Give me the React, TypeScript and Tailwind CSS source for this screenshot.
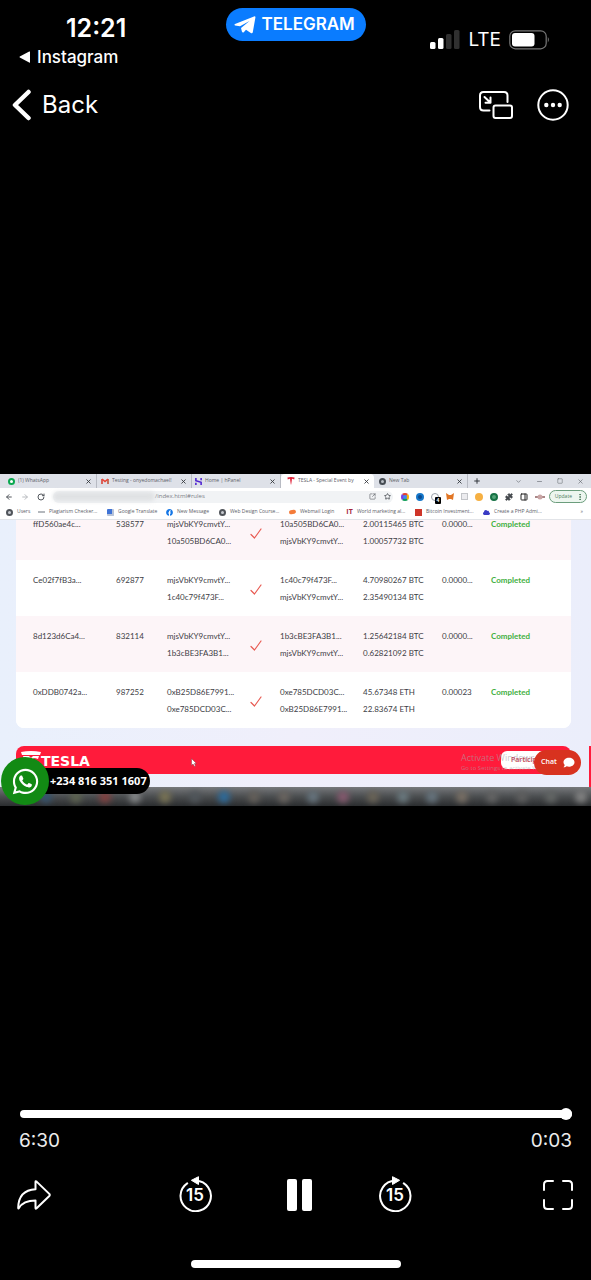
import React from "react";
import {
  ChevronDown,
  Minus,
  Plus,
  RotateCw,
  Square,
  Star,
  X,
  ArrowLeft,
  ArrowRight,
  SquareArrowOutUpRight,
  Puzzle,
  PanelRight,
  MoreVertical,
} from "lucide-react";
import { FaWhatsapp, FaFacebook, FaCloud, FaComment } from "react-icons/fa";

type Tx = {
  hash: string;
  block: string;
  from: [string, string];
  to: [string, string];
  amount: [string, string];
  fee: string;
};

const transactions: Tx[] = [
  {
    hash: "ffD560ae4c...",
    block: "538577",
    from: ["mjsVbKY9cmvtY...", "10a505BD6CA0..."],
    to: ["10a505BD6CA0...", "mjsVbKY9cmvtY..."],
    amount: ["2.00115465 BTC", "1.00057732 BTC"],
    fee: "0.0000...",
  },
  {
    hash: "Ce02f7fB3a...",
    block: "692877",
    from: ["mjsVbKY9cmvtY...", "1c40c79f473F..."],
    to: ["1c40c79f473F...", "mjsVbKY9cmvtY..."],
    amount: ["4.70980267 BTC", "2.35490134 BTC"],
    fee: "0.0000...",
  },
  {
    hash: "8d123d6Ca4...",
    block: "832114",
    from: ["mjsVbKY9cmvtY...", "1b3cBE3FA3B1..."],
    to: ["1b3cBE3FA3B1...", "mjsVbKY9cmvtY..."],
    amount: ["1.25642184 BTC", "0.62821092 BTC"],
    fee: "0.0000...",
  },
  {
    hash: "0xDDB0742a...",
    block: "987252",
    from: ["0xB25D86E7991...", "0xe785DCD03C..."],
    to: ["0xe785DCD03C...", "0xB25D86E7991..."],
    amount: ["45.67348 ETH", "22.83674 ETH"],
    fee: "0.00023",
  },
];

function StatusBar() {
  return (
    <div className="grid grid-cols-3 items-start">
      <div className="pt-[14px] pl-[19px]">
        <div className="pl-[47px] text-[25px] leading-7 font-semibold">12:21</div>
        <a href="#instagram" className="mt-[5px] flex items-center gap-[6px] text-[17px] leading-5 font-medium">
          <svg viewBox="0 0 12 12" className="size-3 fill-white">
            <path d="M11 .8v10.4Q11 12 10.200 11.500L.8 6.600Q.2 6 .8 5.400L10.200.5Q11 .2 11 .8Z" />
          </svg>
          Instagram
        </a>
      </div>
      <button
        type="button"
        className="mt-2 flex h-[33px] w-[140px] items-center gap-[6px] justify-self-center rounded-full bg-[#0a7cff] pl-2 text-[17px] font-semibold"
      >
        <svg viewBox="0 0 22 18" className="h-[18px] w-[22px] shrink-0 fill-white">
          <path d="M1 8 20 .4Q21.700-.1 21.400 1.600L18.800 16.200Q18.400 18 16.800 17L12 13.800 10 16Q8.600 17.300 7.900 15.500L7 12 15.500 5 6 10.300 1 9.500Q-.2 8.800 1 8Z" />
        </svg>
        TELEGRAM
      </button>
      <div className="flex items-center justify-end gap-2 pt-[30px] pr-[41px]">
        <svg viewBox="0 0 30 20" className="h-5 w-[30px]" aria-label="Signal">
          <rect x="0" y="12" width="5.500" height="7" rx="1.500" fill="#fff" />
          <rect x="8" y="8" width="5.500" height="11" rx="1.500" fill="#fff" />
          <rect x="16" y="4" width="5.500" height="15" rx="1.500" fill="#303030" />
          <rect x="24" y="0" width="5.500" height="19" rx="1.500" fill="#303030" />
        </svg>
        <span className="text-[19px] leading-5">LTE</span>
        <svg viewBox="0 0 41 20" className="h-5 w-[41px]" aria-label="Battery">
          <rect x=".8" y=".8" width="36.400" height="18" rx="5.500" fill="none" stroke="#777" strokeWidth="1.200" />
          <rect x="3" y="3" width="22.500" height="13.600" rx="3" fill="#fff" />
          <path d="M38.800 7q2.200 2.700 0 5.500Z" fill="#777" />
        </svg>
      </div>
    </div>
  );
}

function PlayerHeader() {
  return (
    <div className="mt-5 flex h-9 items-center justify-between pr-[22px] pl-3">
      <button type="button" className="flex items-center gap-[10px] text-2xl">
        <svg viewBox="0 0 20 32" className="h-8 w-5" fill="none" stroke="#fff" strokeWidth="4.500" strokeLinecap="round" strokeLinejoin="round">
          <path d="M16.500 3 3 16 16.500 29" />
        </svg>
        Back
      </button>
      <div className="flex items-center gap-6">
        <button type="button" aria-label="Picture in picture">
          <svg viewBox="0 0 34 28" className="h-7 w-[34px]" fill="none" stroke="#fff" strokeWidth="2" strokeLinecap="round" strokeLinejoin="round">
            <path d="M28.500 11V4.500Q28.500 1 25 1H4.500Q1 1 1 4.500V16Q1 19.500 4.500 19.500H10.500" />
            <rect x="14.500" y="14.500" width="18.500" height="12.500" rx="2" />
            <path d="M5.500 6 11.200 11.500M11.500 6.500V11.700H6.500" />
          </svg>
        </button>
        <button type="button" aria-label="More">
          <svg viewBox="0 0 32 32" className="size-8" fill="none" stroke="#fff" strokeWidth="2">
            <circle cx="16" cy="16" r="14.700" />
            <g fill="#fff" stroke="none">
              <circle cx="9.300" cy="16" r="2.200" />
              <circle cx="16" cy="16" r="2.200" />
              <circle cx="22.700" cy="16" r="2.200" />
            </g>
          </svg>
        </button>
      </div>
    </div>
  );
}

function GmailIcon() {
  return (
    <svg viewBox="0 0 8 6" className="h-[6px] w-2" fill="none" strokeWidth="1.600">
      <path d="M1 6V1" stroke="#d8453a" />
      <path d="M7 6V1" stroke="#c0573a" />
      <path d="M1 1 4 3.500 7 1" stroke="#ea4335" />
    </svg>
  );
}

function TeslaT({ className }: { className: string }) {
  return (
    <svg viewBox="0 0 20 20" className={className}>
      <path d="M1 1Q10-1 19 1L18 6Q15 4.500 12.500 4.500L10.500 19H9.500L7.500 4.500Q5 4.500 2 6Z" />
    </svg>
  );
}

const tabs = [
  { title: "(1) WhatsApp", width: "w-[97px]", pad: "pl-2", icon: <span className="size-[7px] rounded-full border-2 border-[#0aa84f] bg-white" /> },
  { title: "Testing - onyedomachael!", width: "w-[95px]", pad: "pl-1", icon: <GmailIcon /> },
  { title: "Home | hPanel", width: "w-[89px]", pad: "pl-[3px]", icon: <svg viewBox="0 0 8 8" className="size-[7px]" fill="none" stroke="#5025d1" strokeWidth="1.800"><path d="M1 0V3L7 5V8M7 0V2.500M1 5.500V8" /></svg> },
  { title: "TESLA - Special Event by", width: "w-[93px]", pad: "pl-[6px]", active: true, icon: <TeslaT className="size-2 fill-[#e0233a]" /> },
  { title: "New Tab", width: "w-[94px]", pad: "pl-[5px]", icon: <span className="size-[7px] rounded-full border-2 border-[#454b52] bg-[#b9bdc4]" /> },
];

function TabStrip() {
  return (
    <div className="flex h-[14px] items-center bg-[#dee1e8] text-[#5c6067]">
      {tabs.map((tab) => (
        <div
          key={tab.title}
          className={`flex h-full items-center gap-[3px] pr-1 ${tab.width} ${tab.pad} ${tab.active ? "rounded-t bg-white" : "border-r border-[#b8bbc3]"}`}
        >
          {tab.icon}
          <span className="min-w-0 flex-1 overflow-hidden whitespace-nowrap">{tab.title}</span>
          <X className="size-[7px] shrink-0 text-[#33373c]" strokeWidth={3} />
        </div>
      ))}
      <div className="flex flex-1 items-center justify-between pr-[7px] pl-[5px]">
        <Plus className="size-2 text-[#33373c]" strokeWidth={3} />
        <div className="flex items-center gap-[14px]">
          <ChevronDown className="size-[7px]" />
          <Minus className="size-[7px]" />
          <Square className="size-[6px]" />
          <X className="size-[7px]" />
        </div>
      </div>
    </div>
  );
}

function AddressBar() {
  return (
    <div className="flex h-[17px] items-center gap-2 bg-white pr-1 pl-[5px] text-[#54585e]">
      <ArrowLeft className="size-2" strokeWidth={3} />
      <ArrowRight className="size-2 text-[#b9bcc0]" strokeWidth={3} />
      <RotateCw className="size-2" strokeWidth={3} />
      <div className="flex h-3 flex-1 items-center rounded-full bg-[#f1f3f5] pr-[2px]">
        <span className="h-[9px] w-[102px] rounded-full bg-[#dfe1e3] blur-[2px]" />
        <span className="flex-1 text-[6px] text-[#7c8086]">/index.html#rules</span>
        <SquareArrowOutUpRight className="mr-2 size-[7px]" />
        <Star className="size-[7px]" strokeWidth={3} />
      </div>
      <div className="flex items-center gap-[7px]">
        <span className="size-2 rounded-full border-2 border-t-[#e34133] border-r-[#f5b400] border-b-[#0f9d58] border-l-[#7b3fe4] bg-[#4285f4]" />
        <span className="size-2 rounded-full border-2 border-[#1677c9] bg-[#0b4b8f]" />
        <span className="relative size-2 rounded-full border border-[#9aa0a8]">
          <span className="absolute top-[3px] left-[3px] h-[7px] w-[6px] rounded-[1px] bg-black text-center text-[5px] leading-[7px] font-bold text-white">4</span>
        </span>
        <svg viewBox="0 0 8 8" className="size-2"><path d="M0 0 3 2H5L8 0 7 7 5 6H3L1 7Z" fill="#e27625" /></svg>
        <span className="size-[7px] border border-[#c3c5c9] bg-[#ececef]" />
        <span className="size-2 rounded-full bg-[#f6b042]" />
        <span className="size-2 rounded-full border-2 border-[#177245] bg-[#54a579]" />
        <Puzzle className="size-2 fill-[#44484d] text-[#44484d]" />
        <PanelRight className="size-2 text-[#222]" strokeWidth={3} />
        <svg viewBox="0 0 10 6" className="h-[6px] w-[10px]"><path d="M0 2H10V4H0Z" fill="#a88" /><circle cx="5" cy="3" r="2.500" fill="#c9a5a5" /></svg>
      </div>
      <button type="button" className="-ml-1 flex h-[13px] items-center gap-1 rounded-full border border-[#6b9d7c] bg-[#edf6ef] pr-[2px] pl-[5px] text-[#4d7a5c]">
        Update
        <MoreVertical className="size-2" strokeWidth={3} />
      </button>
    </div>
  );
}

const dot = <span className="size-[7px] rounded-full border-2 border-[#50545a] bg-[#c7cad0]" />;

const bookmarks = [
  { label: "Users", width: "w-8", icon: dot },
  { label: "Plagiarism Checker...", width: "w-[69px]", icon: <span className="h-[2px] w-[7px] bg-[#b4b8bd]" /> },
  { label: "Google Translate", width: "w-[59px]", icon: <span className="size-[7px] rounded-[1px] border-r-2 border-b-2 border-[#b7c3d8] bg-[#3f73d6]" /> },
  { label: "New Message", width: "w-[53px]", icon: <FaFacebook className="size-[7px] text-[#1677e6]" /> },
  { label: "Web Design Course...", width: "w-[70px]", icon: dot },
  { label: "Webmail Login", width: "w-[57px]", icon: <span className="h-1 w-[7px] -rotate-12 rounded-full bg-[#f47b3a]" /> },
  { label: "World marketing al...", width: "w-[69px]", icon: <span className="text-[7px] font-bold text-[#a3273c]">IT</span> },
  { label: "Bitcoin Investment...", width: "w-[68px]", icon: <span className="size-[7px] bg-[#cf3529]" /> },
  { label: "Create a PHP Admi...", width: "w-[70px]", icon: <FaCloud className="size-[7px] text-[#3a3bc4]" /> },
];

function BookmarksBar() {
  return (
    <div className="flex h-[15px] items-center border-b border-[#e2e4e8] bg-white pr-2 pl-[6px] text-[#5c6067]">
      {bookmarks.map((b) => (
        <a key={b.label} href="#bookmark" className={`flex shrink-0 items-center gap-1 whitespace-nowrap ${b.width}`}>
          <span className="flex w-[7px] shrink-0 justify-center">{b.icon}</span>
          {b.label}
        </a>
      ))}
      <span className="ml-auto">»</span>
    </div>
  );
}

function TransactionsTable() {
  return (
    <div className="-mt-4 mr-5 ml-4 overflow-hidden rounded-lg bg-white">
      <table className="w-full table-fixed border-collapse text-left font-['Lato',sans-serif] text-[8px] leading-[17px] text-[#3d3d45]">
        <colgroup>
          <col className="w-[100px]" />
          <col className="w-[51px]" />
          <col className="w-[83px]" />
          <col className="w-[30px]" />
          <col className="w-[83px]" />
          <col className="w-[79px]" />
          <col className="w-[49px]" />
          <col className="w-[80px]" />
        </colgroup>
        <tbody>
          {transactions.map((tx) => (
            <tr key={tx.block} className="h-14 align-top whitespace-nowrap odd:bg-[#fdf5f8] even:bg-white last:bg-[#fffefd]">
              <td className="pt-3 pl-[17px]">{tx.hash}</td>
              <td className="pt-3">{tx.block}</td>
              <td className="pt-3">
                <div>{tx.from[0]}</div>
                <div>{tx.from[1]}</div>
              </td>
              <td className="pt-6">
                <svg viewBox="0 0 12 11" className="h-[11px] w-3" fill="none" stroke="#e85a52" strokeWidth="1.200" strokeLinecap="round" strokeLinejoin="round">
                  <path d="M1 6.500 4.500 10 11 1" />
                </svg>
              </td>
              <td className="pt-3">
                <div>{tx.to[0]}</div>
                <div>{tx.to[1]}</div>
              </td>
              <td className="pt-3">
                <div>{tx.amount[0]}</div>
                <div>{tx.amount[1]}</div>
              </td>
              <td className="pt-3">{tx.fee}</td>
              <td className="pt-3 font-bold text-[#3fb03f]">Completed</td>
            </tr>
          ))}
        </tbody>
      </table>
    </div>
  );
}

function TeslaBanner() {
  return (
    <div className="relative mt-[18px] mr-5 ml-4 flex h-7 items-start rounded-t-lg bg-[#ff1b3b] pl-[5px]">
      <svg viewBox="0 0 20 20" className="mt-[5px] size-5 fill-white">
        <path d="M0 1Q10-1 20 1L19 4H1ZM2 5H8L10 7 12 5H18L17 8Q15 7 12.500 7L10 19 7.500 7Q5 7 3 8Z" />
      </svg>
      <span className="mt-2 font-['DejaVu_Sans',sans-serif] text-sm leading-[14px] font-bold">TESLA</span>
      <button
        type="button"
        className="absolute top-[5px] right-0 h-[18px] w-[70px] rounded-md bg-white pl-[10px] text-left text-[7px] font-semibold text-[#c23a4d]"
      >
        Particip
      </button>
      <div className="absolute top-[6px] left-[445px] font-['Open_Sans',sans-serif] whitespace-nowrap text-[#a9a0a8]/60">
        <div className="text-[9px] leading-3">Activate Windows</div>
        <div className="text-[6px] leading-[9px]">Go to Settings to activate Windows</div>
      </div>
      <svg viewBox="0 0 6 9" className="absolute top-3 left-[175px] h-[9px] w-[6px]">
        <path d="M.5 .5V7.500L2 6 3.500 8.500 4.500 8 3.500 5.500H5.500Z" fill="#fff" stroke="#8d3140" strokeWidth=".5" />
      </svg>
      <button
        type="button"
        className="absolute top-1 -right-[10px] flex h-[25px] w-[47px] items-center gap-[6px] rounded-full bg-[#d8321f] pl-[7px] text-[7px] font-semibold"
      >
        Chat
        <FaComment className="h-[11px] w-3" />
      </button>
    </div>
  );
}

const taskIcons = [
  "bg-[#34536f]", "bg-[#5d6350]", "bg-[#84403f]", "bg-[#86888a]", "bg-[#7a7454]",
  "bg-[#50565b]", "bg-[#2c6c9e]", "bg-[#65605a]", "bg-[#6b6560]", "bg-[#67757f]",
  "bg-[#87596f]", "bg-[#6b6457]", "bg-[#6b7a80]", "bg-[#67757f]", "bg-[#7a7065]",
  "bg-[#646464]", "bg-[#5f5f5f]", "bg-[#646766]", "bg-[#858585]",
];

function Taskbar() {
  return (
    <div className="flex h-[19px] items-center justify-between overflow-hidden bg-linear-to-b from-[#77797c] via-[#4b4e50] to-[#2b2d2f] pr-1 pl-10">
      {taskIcons.map((color, i) => (
        <span key={i} className={`size-3 rounded-full blur-[3px] ${color}`} />
      ))}
    </div>
  );
}

function WhatsAppBadge() {
  return (
    <a href="#whatsapp" aria-label="WhatsApp +234 816 351 1607" className="absolute bottom-px left-px flex items-center">
      <span className="z-10 flex size-12 items-center justify-center rounded-full bg-[#128a14]">
        <FaWhatsapp className="size-[29px]" />
      </span>
      <span className="-ml-6 flex h-[26px] items-center rounded-r-full bg-black pr-[3px] pl-[25px] font-['Noto_Sans',sans-serif] text-[11px] font-bold whitespace-nowrap">
        +234 816 351 1607
      </span>
    </a>
  );
}

function VideoFrame() {
  return (
    <section aria-label="Video" className="relative w-full overflow-hidden font-['Open_Sans',sans-serif] text-[5px]">
      <TabStrip />
      <AddressBar />
      <BookmarksBar />
      <div className="relative overflow-hidden bg-linear-to-r from-[#e9f0fc] via-[#f0effb] to-[#ebeefb] pb-[13px]">
        <TransactionsTable />
        <TeslaBanner />
        <span className="absolute right-0 bottom-0 h-[41px] w-[2px] bg-[#ff1b3b]" />
      </div>
      <Taskbar />
      <WhatsAppBadge />
    </section>
  );
}

function SkipButton({ forward }: { forward?: boolean }) {
  return (
    <button
      type="button"
      aria-label={forward ? "Forward 15 seconds" : "Back 15 seconds"}
      className="relative flex size-[33px] items-center justify-center"
    >
      <svg viewBox="0 0 33 36" className={`absolute bottom-0 left-0 h-9 w-[33px] ${forward ? "-scale-x-100" : ""}`}>
        <path d="M8.200 6.900A15.200 15.200 0 1 0 17 4.300" fill="none" stroke="#fff" strokeWidth="2" strokeLinecap="round" transform="translate(0 .5)" />
        <path d="M12.400 4.300 19.500.7V8.500Z" fill="#fff" stroke="#fff" strokeLinejoin="round" />
      </svg>
      <span className="text-[17px] leading-4 font-semibold">15</span>
    </button>
  );
}

function PlayerControls() {
  return (
    <footer className="flex min-h-[180px] flex-col">
      <div className="flex h-[27px] items-center pr-[19px] pl-5">
        <input
          type="range"
          aria-label="Playback position"
          min={0}
          max={390}
          defaultValue={390}
          className="h-2 w-full appearance-none rounded-full bg-white [&::-webkit-slider-thumb]:size-3 [&::-webkit-slider-thumb]:appearance-none [&::-webkit-slider-thumb]:rounded-full [&::-webkit-slider-thumb]:bg-white"
        />
      </div>
      <div className="flex justify-between px-[19px] text-[19px] leading-7 text-[#ececec]">
        <span>6:30</span>
        <span>0:03</span>
      </div>
      <div className="mt-5 flex h-10 items-center justify-between pr-[18px] pl-[17px]">
        <button type="button" aria-label="Share" className="w-[34px]">
          <svg viewBox="0 0 34 30" className="h-[30px] w-[34px]" fill="none" stroke="#fff" strokeWidth="2" strokeLinejoin="round">
            <path d="M18.500 9.200V2Q18.500 .6 19.600 1.600L32.300 13.900Q33.200 15 32.300 16L19.600 28.300Q18.500 29.200 18.500 28V20.600C11 20.600 5.500 22 1.800 28.200 1.500 28.700 1.200 28.500 1.200 28 1.400 16.500 6.500 9.800 18.500 9.200Z" />
          </svg>
        </button>
        <div className="flex items-center gap-[67px]">
          <SkipButton />
          <button type="button" aria-label="Pause" className="flex w-[33px] justify-end gap-[5px]">
            <span className="h-8 w-[10px] rounded-xs bg-white" />
            <span className="h-8 w-[10px] rounded-xs bg-white" />
          </button>
          <SkipButton forward />
        </div>
        <button type="button" aria-label="Full screen" className="flex w-[34px] justify-end">
          <svg viewBox="0 0 30 30" className="size-[30px]" fill="none" stroke="#fff" strokeWidth="2" strokeLinecap="round">
            <path d="M1 10V4.500Q1 1 4.500 1H10M20 1H25.500Q29 1 29 4.500V10M29 20V25.500Q29 29 25.500 29H20M10 29H4.500Q1 29 1 25.500V20" />
          </svg>
        </button>
      </div>
      <div className="mt-auto mb-3 h-2 w-[210px] self-center rounded-full bg-white" />
    </footer>
  );
}

export default function App() {
  return (
    <div className="flex min-h-screen flex-col bg-black font-['Inter',sans-serif] text-white">
      <header className="min-h-[180px]">
        <StatusBar />
        <PlayerHeader />
      </header>
      <main className="flex flex-1 items-center">
        <VideoFrame />
      </main>
      <PlayerControls />
    </div>
  );
}
